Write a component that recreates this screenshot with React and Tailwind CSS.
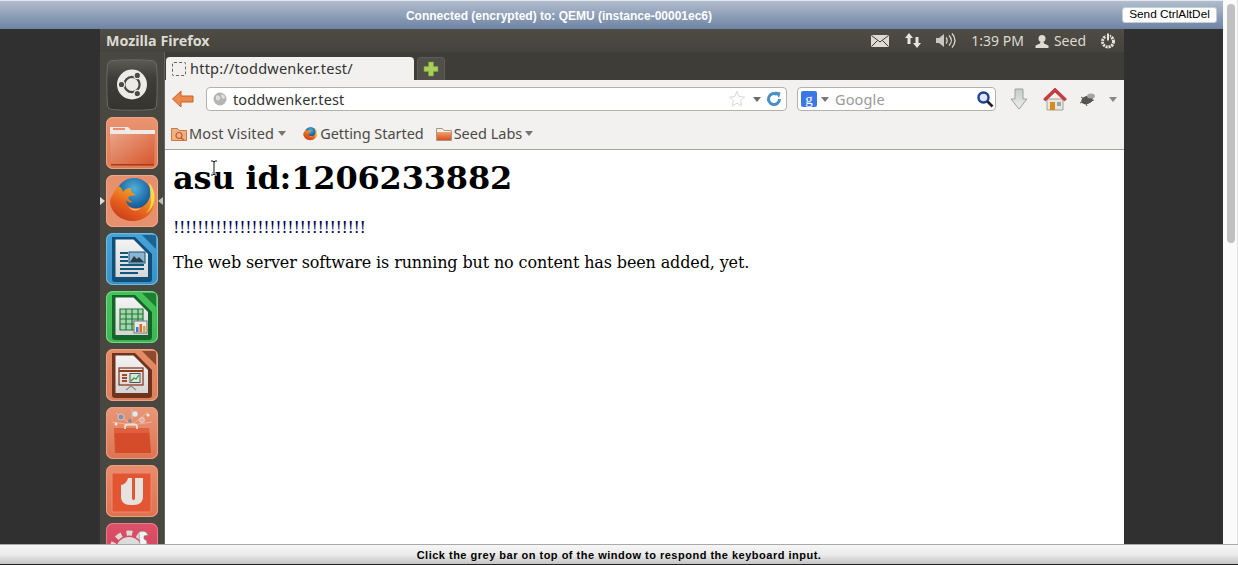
import React from "react";

const ubuntu = '"Noto Sans", "Open Sans", sans-serif';

function Tile({ from, to, border, children }) {
  return (
    <div
      className="relative w-[52px] h-[52px] shrink-0 rounded-[7px] overflow-hidden"
      style={{ background: `linear-gradient(180deg, ${from}, ${to})`, boxShadow: `inset 0 0 0 1px ${border}` }}
    >
      <svg viewBox="0 0 52 52" className="absolute inset-0 w-full h-full">{children}</svg>
    </div>
  );
}

function UbuntuLogo() {
  return (
    <svg viewBox="0 0 52 52" width="52" height="52" className="shrink-0">
      <defs>
        <linearGradient id="ubtile" x1="0" y1="0" x2="0" y2="1">
          <stop offset="0" stopColor="#5c5b56" />
          <stop offset="0.35" stopColor="#3f3e3a" />
          <stop offset="1" stopColor="#35342f" />
        </linearGradient>
      </defs>
      <path d="M6 1.500C18 .5 34 .5 46 1.500c2.500.2 4.300 2 4.500 4.500 1 13 1 27 0 40-.2 2.500-2 4.300-4.500 4.500-12 1-28 1-40 0-2.500-.2-4.300-2-4.500-4.500-1-13-1-27 0-40 .2-2.500 2-4.300 4.500-4.500z" fill="url(#ubtile)" stroke="#6a6964" />
      <circle cx="26" cy="25.500" r="15" fill="#ecebe8" />
      <circle cx="26" cy="25.500" r="7.600" fill="none" stroke="#4a4944" strokeWidth="2.200" />
      <g fill="#4a4944" stroke="#ecebe8" strokeWidth="1.200">
        <circle cx="15.500" cy="25.500" r="3.200" />
        <circle cx="31.300" cy="16.400" r="3.200" />
        <circle cx="31.300" cy="34.600" r="3.200" />
      </g>
    </svg>
  );
}

function FirefoxGlyph({ size = 52 }) {
  return (
    <svg viewBox="0 0 52 52" width={size} height={size} className="block">
      <defs>
        <radialGradient id="ffglobe" cx="0.5" cy="0.3" r="0.75">
          <stop offset="0" stopColor="#4fb0dc" />
          <stop offset="0.55" stopColor="#1f6ca8" />
          <stop offset="1" stopColor="#123a70" />
        </radialGradient>
        <linearGradient id="fffox" x1="0.85" y1="0" x2="0.25" y2="1">
          <stop offset="0" stopColor="#f8d23c" />
          <stop offset="0.3" stopColor="#f09a26" />
          <stop offset="0.65" stopColor="#e6601e" />
          <stop offset="1" stopColor="#c93a1a" />
        </linearGradient>
      </defs>
      <circle cx="28" cy="21" r="18" fill="url(#ffglobe)" />
      <path
        d="M11 11C9 18 4 21 4 27c1 11 11 19 23 19 13 0 22-10 22-21 0-7-2-13-6-17 2 6 2 12 0 16-2 6-8 10-15 9-4 0-8-4-8-8 1 2 4 3 7 2-5-2-6-5-3-6l6-1c-3-2-6-3-5-7-3 0-6 1-8 4-1-4-3-6-6-6z"
        fill="url(#fffox)"
      />
      <path d="M43 8c6 7 7 16 3 24-2 3-4 5-6 6 4-4 5-8 5-12 0-6-1-12-2-18z" fill="#fbdc58" opacity=".9" />
      <path d="M22 31c3 3 8 4 13 2-3 3-9 4-13-2z" fill="#f8d9a8" opacity=".8" />
    </svg>
  );
}

function DocIcon({ dark, children }) {
  return (
    <>
      <defs>
        <linearGradient id="docface" x1="0" y1="0" x2="0" y2="1">
          <stop offset="0" stopColor="#f3f3f3" />
          <stop offset="1" stopColor="#d6d6d6" />
        </linearGradient>
      </defs>
      <path d="M36 2h12a2 2 0 0 1 2 2v12z" fill={dark} opacity=".75" />
      <path d="M6 4h23l17 17v25a3 3 0 0 1-3 3H9a3 3 0 0 1-3-3z" fill={dark} />
      <path d="M9.500 6.500h18l14.500 14.500V44H9.500z" fill="url(#docface)" />
      {children}
    </>
  );
}

function Launcher() {
  return (
    <div className="w-[65px] shrink-0 flex flex-col items-center gap-[6px] pt-[7px] pr-[1px] bg-[#484740] border-r border-r-[#65645e] overflow-hidden relative">
      <UbuntuLogo />
      <Tile from="#eb9370" to="#df7a52" border="#eea384">
        <defs>
          <linearGradient id="folderfront" x1="0" y1="0" x2="1" y2="1">
            <stop offset="0" stopColor="#e9a487" />
            <stop offset="1" stopColor="#d7552c" />
          </linearGradient>
        </defs>
        <path d="M4 10h18l3 3h24v7H4z" fill="#eeeae6" />
        <path d="M7 12h12" stroke="#e8906e" strokeWidth="2" />
        <path d="M4 17h45l-1 30a1.500 1.500 0 0 1-1.500 1.500H6.500A1.500 1.500 0 0 1 5 47z" fill="url(#folderfront)" />
        <path d="M5 47v1.500h43V47z" fill="#a93c1d" />
      </Tile>
      <div className="relative w-[52px] h-[52px] shrink-0 rounded-[7px] bg-[#e6906e] shadow-[inset_0_0_0_1px_#f0a78a]">
        <FirefoxGlyph />
      </div>
      <Tile from="#45a4d8" to="#3b90c6" border="#6cbbe5">
        <DocIcon dark="#0f4f7a">
          <path d="M14 20h8M14 24h8M14 28h8M14 32h24M14 36h24M14 40h18" stroke="#12557f" strokeWidth="2" />
          <rect x="23" y="19" width="16" height="11" fill="#8ab6d2" stroke="#12557f" />
          <path d="M24 29l4-6 3 3 2-2 5 5z" fill="#2a3c48" />
        </DocIcon>
      </Tile>
      <Tile from="#45c45a" to="#3fb654" border="#6fde80">
        <DocIcon dark="#15652a">
          <path d="M14 18h23v21H14z" fill="#a6d4ac" />
          <path d="M14 18h23v21H14zM14 23h23M14 28h23M14 33h23M20 18v21M26 18v21M32 18v21" fill="none" stroke="#1f7a36" strokeWidth="1.200" />
          <rect x="28" y="30" width="13" height="12" fill="#e8e8e8" stroke="#777" />
          <rect x="30" y="36" width="2.500" height="5" fill="#2f86c0" />
          <rect x="33.500" y="33" width="2.500" height="8" fill="#e0642c" />
          <rect x="37" y="35" width="2.500" height="6" fill="#e0a52c" />
        </DocIcon>
      </Tile>
      <Tile from="#e58c68" to="#dc7f5b" border="#eda384">
        <DocIcon dark="#70341e">
          <rect x="13" y="19" width="24" height="17" fill="none" stroke="#8c3c20" strokeWidth="1.300" />
          <path d="M13 22h24" stroke="#8c3c20" strokeWidth="1.800" />
          <path d="M16 26h5M16 29h5M16 32h5" stroke="#a4482a" strokeWidth="1.800" />
          <rect x="24" y="24.500" width="10" height="9" fill="#d7e8d7" stroke="#555" />
          <path d="M25 32l3-3 2 1 3-4" stroke="#2f9a3a" fill="none" strokeWidth="1.200" />
          <path d="M25 37l-5 4M25 37l5 4" stroke="#8b8b8b" fill="none" strokeWidth="1.200" />
        </DocIcon>
      </Tile>
      <Tile from="#e8987a" to="#dc7450" border="#ee9f80">
        <path d="M26 18L10 6M26 18L42 5M26 18V2M26 18L6 15M26 18l20-3" stroke="#f7d9c8" strokeWidth=".7" opacity=".7" />
        <path d="M8 21h35l2 25H9z" fill="#d44c2a" />
        <path d="M8 21h35l.4 5H8z" fill="#df5f3e" />
        <path d="M19 22v-2a2.500 2.500 0 0 1 2.500-2.500h7A2.500 2.500 0 0 1 31 20v2" fill="none" stroke="#f3ddd0" strokeWidth="1.800" />
        <circle cx="15" cy="10" r="3" fill="#7f8fb0" stroke="#eee" strokeWidth=".6" />
        <circle cx="29" cy="7" r="3" fill="#e8e8e8" stroke="#aaa" strokeWidth=".5" />
        <circle cx="36" cy="13" r="2.500" fill="#e6b0a0" stroke="#eee" strokeWidth=".5" />
        <circle cx="24" cy="14" r="2" fill="#8a8a8a" />
        <circle cx="10" cy="17" r="1.500" fill="#f6e6dc" />
        <circle cx="42" cy="8" r="1.500" fill="#f6e6dc" />
      </Tile>
      <Tile from="#e98c6c" to="#dd7250" border="#f09d80">
        <rect x="6" y="8" width="39" height="39" rx="1.500" fill="#e25634" stroke="#ef8b6e" />
        <path d="M15 20c3 0 6-3 7-7h4v20c0 1 .5 2 1.500 2s1.500-1 1.500-2V13h8v19c0 5-4 8-9 8h-4c-5 0-9-3-9-8z" fill="#e8e2de" />
      </Tile>
      <Tile from="#dc5068" to="#cf4058" border="#ea7a8e">
        <circle cx="23" cy="27" r="13" fill="#dcdcdc" />
        <circle cx="23" cy="27" r="17" fill="none" stroke="#dcdcdc" strokeWidth="5" strokeDasharray="6 5" />
        <path d="M33 9c4-2 8 0 9 3l-4 1 0 3 3 2-1 4-6 2z" fill="#f2f2f2" stroke="#888" strokeWidth=".6" />
      </Tile>
      <span className="absolute left-0 top-[145px] w-0 h-0 border-y-[4px] border-y-transparent border-l-[5px] border-l-[#dcdcd8]" />
      <span className="absolute right-px top-[145px] w-0 h-0 border-y-[4px] border-y-transparent border-r-[5px] border-r-[#bdbdb9]" />
    </div>
  );
}

function Caret({ color = "#77756f" }) {
  return <span className="inline-block w-0 h-0 border-x-[4px] border-x-transparent border-t-[5px]" style={{ borderTopColor: color }} />;
}

function FolderIcon() {
  return (
    <svg viewBox="0 0 16 16" width="16" height="16">
      <defs>
        <linearGradient id="smfolder" x1="0" y1="0" x2="0" y2="1">
          <stop offset="0" stopColor="#f0a070" />
          <stop offset="1" stopColor="#d8501f" />
        </linearGradient>
      </defs>
      <path d="M.5 2.500h6l1.500 2h7.500v10H.5z" fill="#f2f0ec" stroke="#a9967f" />
      <path d="M1 6h14v8H1z" fill="url(#smfolder)" />
    </svg>
  );
}

function PanelIcons() {
  return (
    <div className="ml-auto flex items-center h-full text-[#dfdbd2]">
      <svg viewBox="0 0 18 12" width="18" height="12" className="mr-[15px]">
        <rect width="18" height="12" rx="1" fill="#dfdbd2" />
        <path d="M.5 .5L9 7l8.500-6.500M.5 11.500L6.500 5.500M17.500 11.500L11.500 5.500" fill="none" stroke="#3f3d38" />
      </svg>
      <svg viewBox="0 0 18 17" width="18" height="17" className="mr-[13px]">
        <path d="M5 1L1 6h2.500v6h3V6H9zM13 16l4-5h-2.500V5h-3v6H9z" fill="#e8e5dd" />
      </svg>
      <svg viewBox="0 0 21 15" width="21" height="15" className="mr-[15px]">
        <path d="M1 5h3l5-4v13l-5-4H1z" fill="#c9c6bd" />
        <path d="M11 4.500c1.500 1.500 1.500 4.500 0 6M14 2.500c3 3 3 7 0 10M17 .5c4 4 4 10 0 14" fill="none" stroke="#dfdbd2" strokeWidth="1.300" />
      </svg>
      <span className="mr-[11px]" style={{ fontFamily: ubuntu, fontSize: 14, color: "#dcdad2" }}>1:39 PM</span>
      <svg viewBox="0 0 14 14" width="14" height="14" className="mr-[5px]">
        <circle cx="7" cy="4.500" r="3.500" fill="#dfdbd2" />
        <path d="M5.500 7.500h3L9 9.500l4.500 2V14H.5v-2.500L5 9.500z" fill="#dfdbd2" />
      </svg>
      <span className="mr-[14px]" style={{ fontFamily: ubuntu, fontSize: 14, color: "#dcdad2" }}>Seed</span>
      <svg viewBox="0 0 16 16" width="16" height="16" className="mr-[8px]">
        <circle cx="8" cy="8.500" r="5.500" fill="none" stroke="#e6e3db" strokeWidth="3" strokeDasharray="2.100 .8" />
        <path d="M8 .5v7" stroke="#3f3d38" strokeWidth="3.600" />
        <path d="M8 .5v7" stroke="#e6e3db" strokeWidth="2" />
      </svg>
    </div>
  );
}

function NavBar() {
  return (
    <div className="h-[38px] flex items-center shrink-0 pl-[6px]">
      <svg viewBox="0 0 24 20" width="24" height="20" className="shrink-0">
        <path d="M10 2L1.500 10 10 18v-5h12V7H10z" fill="#ec8a4e" stroke="#c8602a" strokeLinejoin="round" />
      </svg>
      <div className="ml-[11px] w-[581px] h-[24px] flex items-center bg-white border border-[#b3b1ab] rounded-[4px]">
        <svg viewBox="0 0 14 14" width="14" height="14" className="ml-[6px]">
          <circle cx="7" cy="7" r="6.500" fill="#b5b5b3" />
          <path d="M3 4c2-1 3 0 4 1s0 2-1 3-3 0-3-1zM9 2c2 1 3 3 3 4l-2 1-2-3z" fill="#dfdfdd" />
        </svg>
        <span className="ml-[6px] pt-[2px] text-[14.500px] tracking-[0.13px] text-[#333] whitespace-nowrap" style={{ fontFamily: ubuntu }}>toddwenker.test</span>
        <div className="ml-auto flex items-center pr-[4px]">
          <svg viewBox="0 0 18 18" width="18" height="18">
            <path d="M9 1.500l2.300 5 5.200.6-3.900 3.500 1.100 5.300L9 13.200l-4.700 2.700 1.100-5.300L1.500 7.100l5.200-.6z" fill="#fff" stroke="#d8d8d6" />
          </svg>
          <span className="ml-[7px] mr-[5px] flex"><Caret color="#6b6b68" /></span>
          <svg viewBox="0 0 16 16" width="16" height="16">
            <path d="M13.500 8A5.500 5.500 0 1 1 11 3.400" fill="none" stroke="#4a8fc6" strokeWidth="3" />
            <path d="M9 .5l5.500 1-1.500 5.500z" fill="#4a8fc6" />
          </svg>
        </div>
      </div>
      <div className="ml-[10px] w-[199px] h-[24px] flex items-center bg-white border border-[#b3b1ab] rounded-[4px]">
        <span className="ml-[3px] w-[16px] h-[16px] flex items-center justify-center rounded-[2px] bg-[#3b78e7] text-white text-[15px] leading-[14px]" style={{ fontFamily: '"Liberation Serif", serif' }}>g</span>
        <span className="ml-[4px] flex"><Caret color="#777" /></span>
        <span className="ml-[6px] pt-[2px] text-[14.500px] tracking-[0.13px] text-[#9a9a98]" style={{ fontFamily: ubuntu }}>Google</span>
        <svg viewBox="0 0 18 18" width="18" height="18" className="ml-auto mr-[1px]">
          <circle cx="7.500" cy="7.500" r="5" fill="#dfe9f7" stroke="#1f3f94" strokeWidth="2.400" />
          <path d="M11.500 11.500l5 5" stroke="#222" strokeWidth="2.600" />
        </svg>
      </div>
      <svg viewBox="0 0 20 24" width="20" height="24" className="ml-[13px]">
        <defs>
          <linearGradient id="dlarrow" x1="0" y1="0" x2="0" y2="1">
            <stop offset="0" stopColor="#c4cac4" />
            <stop offset="1" stopColor="#eef0ee" />
          </linearGradient>
        </defs>
        <path d="M6 2h8v10h4l-8 10-8-10h4z" fill="url(#dlarrow)" stroke="#9ca49c" />
      </svg>
      <svg viewBox="0 0 24 24" width="24" height="24" className="ml-[14px]">
        <path d="M4 12h16v11H4z" fill="#e8e6df" stroke="#a4a299" />
        <rect x="7" y="15" width="5" height="8" fill="#d98a1e" />
        <rect x="14" y="15" width="4" height="4" fill="#98a6ae" />
        <path d="M12 1L.5 12l2 2L12 5l9.500 9 2-2z" fill="#cc3a3e" stroke="#a32226" strokeWidth=".6" />
      </svg>
      <svg viewBox="0 0 18 14" width="18" height="14" className="ml-[12px]">
        <ellipse cx="8" cy="8" rx="6" ry="4" fill="#55544f" transform="rotate(-20 8 8)" />
        <ellipse cx="12" cy="4" rx="4" ry="2.500" fill="#a4a4a0" />
        <path d="M2 5l3 2M1 11l4-2M7 12l1 2M15 8l-3 1" stroke="#555" />
      </svg>
      <span className="ml-[12px] flex"><Caret color="#888" /></span>
    </div>
  );
}

function BookmarkBar() {
  return (
    <div className="h-[32px] flex items-center shrink-0 pl-[6px] text-[14.500px] text-[#4c4a46] border-b border-[#a5a3a0]" style={{ fontFamily: ubuntu }}>
      <svg viewBox="0 0 16 16" width="16" height="16">
        <path d="M.5 2.500h6l1.500 2h7.500v10H.5z" fill="#f0b184" stroke="#c97a44" />
        <circle cx="8" cy="9.500" r="3" fill="none" stroke="#c05a26" strokeWidth="1.200" />
        <path d="M10 12l3 2" stroke="#c05a26" strokeWidth="1.200" />
      </svg>
      <span className="ml-[2px] tracking-[0.15px]">Most Visited</span>
      <span className="ml-[4px] flex"><Caret /></span>
      <span className="ml-[16px] flex"><FirefoxGlyph size={16} /></span>
      <span className="ml-[2px] tracking-[-0.05px]">Getting Started</span>
      <span className="ml-[12px] flex"><FolderIcon /></span>
      <span className="ml-[2px]">Seed Labs</span>
      <span className="ml-[3px] flex"><Caret /></span>
    </div>
  );
}

export default function App() {
  return (
    <div className="w-[1238px] h-[565px] flex flex-col overflow-hidden bg-white">
      <div className="flex-1 min-h-0 flex">
        <div className="w-[1223px] flex flex-col min-h-0">
          <div className="h-[29px] shrink-0 flex items-center bg-gradient-to-b from-[#b2bdcd] to-[#6d84a3] border-t border-white/80">
            <span className="flex-1 text-center pr-[4px] pt-[2px] text-white text-[12px] font-bold" style={{ fontFamily: '"Liberation Sans", sans-serif' }}>
              Connected (encrypted) to: QEMU (instance-00001ec6)
            </span>
            <button className="mr-[6px] h-[16px] w-[95px] bg-white rounded-[3px] border border-[#c5ccd6] text-[11.800px] text-black leading-none" style={{ fontFamily: '"Liberation Sans", sans-serif' }}>
              Send CtrlAltDel
            </button>
          </div>
          <div className="flex-1 min-h-0 flex bg-[#303030]">
            <div className="w-[100px] shrink-0" />
            <div className="w-[1024px] shrink-0 flex flex-col min-h-0">
              <div className="h-[23px] shrink-0 flex items-center pl-[6px] bg-gradient-to-b from-[#4f4c45] to-[#45433d]">
                <span className="font-bold text-[14.300px] text-[#dcdad2]" style={{ fontFamily: ubuntu }}>Mozilla Firefox</span>
                <PanelIcons />
              </div>
              <div className="flex-1 min-h-0 flex">
                <Launcher />
                <div className="flex-1 min-w-0 flex flex-col bg-white">
                  <div className="h-[28px] shrink-0 flex items-end bg-[#3f3d38] pl-[1px]">
                    <div className="w-[248px] h-[23px] bg-[#f2f1ef] rounded-t-[4px] flex items-center pl-[6px]">
                      <span className="w-[14px] h-[14px] rounded-[2px] border border-dashed border-[#66645f]" />
                      <span className="ml-[4px] text-[14.500px] tracking-[0.22px] text-[#333] whitespace-nowrap" style={{ fontFamily: ubuntu }}>http://toddwenker.test/</span>
                    </div>
                    <div className="ml-[3px] w-[28px] h-[23px] bg-[#514f49] rounded-t-[4px] border border-b-0 border-[#5e5c56] flex items-center justify-center">
                      <svg viewBox="0 0 16 16" width="16" height="16">
                        <path d="M5.500 1h5v4.500H15v5h-4.500V15h-5v-4.500H1v-5h4.500z" fill="#a8cf5a" stroke="#78a030" strokeWidth=".6" />
                      </svg>
                    </div>
                  </div>
                  <div className="shrink-0 bg-[#f2f1ef]">
                    <NavBar />
                    <BookmarkBar />
                  </div>
                  <div className="flex-1 min-h-0 overflow-hidden pl-[8px] text-black" style={{ fontFamily: '"DejaVu Serif", serif' }}>
                    <div className="relative pt-[9px]">
                      <h1 className="text-[32px] font-bold leading-[38px] tracking-[-0.18px] whitespace-nowrap">asu id:1206233882</h1>
                      <svg viewBox="0 0 8 16" width="8" height="16" className="absolute left-[37px] top-[10px]">
                        <path d="M1 1h2l1 1 1-1h2M4 2v12M1 15h2l1-1 1 1h2" fill="none" stroke="#fff" strokeWidth="3" />
                        <path d="M1 1h2l1 1 1-1h2M4 2v12M1 15h2l1-1 1 1h2" fill="none" stroke="#111" />
                      </svg>
                      <p className="text-[16px] leading-[19px] mt-[21px] tracking-[-0.41px] text-[#000050]">!!!!!!!!!!!!!!!!!!!!!!!!!!!!!!!!</p>
                      <p className="text-[16px] leading-[19px] mt-[16px] tracking-[-0.13px] whitespace-nowrap">The web server software is running but no content has been added, yet.</p>
                    </div>
                  </div>
                </div>
              </div>
            </div>
            <div className="flex-1" />
          </div>
        </div>
        <div className="w-[15px] shrink-0 bg-[#fafafa] pt-[4px] pl-[4px] border-r border-[#e4e4e4]">
          <div className="w-[8px] h-[239px] bg-[#c0c0c0] rounded-[4px]" />
        </div>
      </div>
      <div className="h-[21px] shrink-0 flex items-center justify-center bg-gradient-to-b from-[#f6f6f6] via-[#ebebeb] to-[#c4c4c4] border-t border-[#aaa] border-b border-b-[#222]">
        <span className="pt-[2px] text-[11px] tracking-[0.5px] font-bold text-black" style={{ fontFamily: '"Liberation Sans", sans-serif' }}>
          Click the grey bar on top of the window to respond the keyboard input.
        </span>
      </div>
    </div>
  );
}
